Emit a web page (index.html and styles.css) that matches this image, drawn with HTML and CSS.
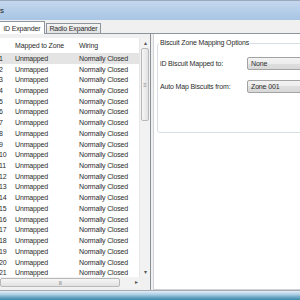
FILE: index.html
```html
<!DOCTYPE html>
<html>
<head>
<meta charset="utf-8">
<link rel="stylesheet" href="styles.css">
</head>
<body>
<div class="titlebar"><span class="title">s</span></div>
<div class="tabs">
  <div class="tab active">iD Expander</div>
  <div class="tab">Radio Expander</div>
</div>
<div class="main">
  <div class="list">
    <div class="listmain">
      <div class="grid">
        <div class="row header"><span class="c1"></span><span class="c2">Mapped to Zone</span><span class="c3">Wiring</span></div>
        <div class="row sel"><span class="c1">1</span><span class="c2">Unmapped</span><span class="c3">Normally Closed</span></div>
        <div class="row"><span class="c1">2</span><span class="c2">Unmapped</span><span class="c3">Normally Closed</span></div>
        <div class="row"><span class="c1">3</span><span class="c2">Unmapped</span><span class="c3">Normally Closed</span></div>
        <div class="row"><span class="c1">4</span><span class="c2">Unmapped</span><span class="c3">Normally Closed</span></div>
        <div class="row"><span class="c1">5</span><span class="c2">Unmapped</span><span class="c3">Normally Closed</span></div>
        <div class="row"><span class="c1">6</span><span class="c2">Unmapped</span><span class="c3">Normally Closed</span></div>
        <div class="row"><span class="c1">7</span><span class="c2">Unmapped</span><span class="c3">Normally Closed</span></div>
        <div class="row"><span class="c1">8</span><span class="c2">Unmapped</span><span class="c3">Normally Closed</span></div>
        <div class="row"><span class="c1">9</span><span class="c2">Unmapped</span><span class="c3">Normally Closed</span></div>
        <div class="row"><span class="c1">10</span><span class="c2">Unmapped</span><span class="c3">Normally Closed</span></div>
        <div class="row"><span class="c1">11</span><span class="c2">Unmapped</span><span class="c3">Normally Closed</span></div>
        <div class="row"><span class="c1">12</span><span class="c2">Unmapped</span><span class="c3">Normally Closed</span></div>
        <div class="row"><span class="c1">13</span><span class="c2">Unmapped</span><span class="c3">Normally Closed</span></div>
        <div class="row"><span class="c1">14</span><span class="c2">Unmapped</span><span class="c3">Normally Closed</span></div>
        <div class="row"><span class="c1">15</span><span class="c2">Unmapped</span><span class="c3">Normally Closed</span></div>
        <div class="row"><span class="c1">16</span><span class="c2">Unmapped</span><span class="c3">Normally Closed</span></div>
        <div class="row"><span class="c1">17</span><span class="c2">Unmapped</span><span class="c3">Normally Closed</span></div>
        <div class="row"><span class="c1">18</span><span class="c2">Unmapped</span><span class="c3">Normally Closed</span></div>
        <div class="row"><span class="c1">19</span><span class="c2">Unmapped</span><span class="c3">Normally Closed</span></div>
        <div class="row"><span class="c1">20</span><span class="c2">Unmapped</span><span class="c3">Normally Closed</span></div>
        <div class="row"><span class="c1">21</span><span class="c2">Unmapped</span><span class="c3">Normally Closed</span></div>
      </div>
      <div class="vscroll">
        <div class="arrow">&#9652;</div>
        <div class="vthumb"><span class="grip">&#8801;</span></div>
        <div class="vtrack"></div>
        <div class="arrow">&#9662;</div>
      </div>
    </div>
    <div class="hscroll">
      <div class="hthumb"><span class="hgrip">III</span></div>
      <div class="htrack"></div>
      <div class="arrow">&#9656;</div>
      <div class="corner"></div>
    </div>
  </div>
  <div class="splitter"></div>
  <div class="right">
    <fieldset class="group">
      <legend>Biscuit Zone Mapping Options</legend>
      <div class="field"><span class="label">iD Biscuit Mapped to:</span><span class="combo">None</span></div>
      <div class="field"><span class="label">Auto Map Biscuits from:</span><span class="combo">Zone 001</span></div>
    </fieldset>
  </div>
</div>
<div class="frame"></div>
</body>
</html>
```
FILE: styles.css
```css
html, body {
  margin: 0;
  padding: 0;
}
body {
  width: 300px;
  height: 300px;
  overflow: hidden;
  font-family: "Liberation Sans", Arial, sans-serif;
  font-size: 7px;
  letter-spacing: -0.15px;
  color: #2b2b2b;
  background: #f0f0f0;
}
.titlebar {
  height: 20px;
  box-sizing: border-box;
  border-top: 1px solid #9aa9bb;
  background: linear-gradient(#c3d7ed, #a8c5e4);
  display: flex;
  align-items: center;
}
.title {
  font-size: 8px;
  color: #1a1a1a;
}
.tabs {
  height: 14px;
  box-sizing: border-box;
  display: flex;
  align-items: flex-end;
  border-bottom: 1px solid #8e949c;
  background: #f0f0f0;
}
.tab {
  display: flex;
  align-items: center;
  justify-content: center;
  box-sizing: border-box;
  white-space: nowrap;
}
.tab.active {
  width: 45px;
  height: 13px;
  margin-bottom: -1px;
  background: #ffffff;
  border: 1px solid #8e949c;
  border-left: none;
  border-bottom: none;
}
.tab:not(.active) {
  width: 55px;
  height: 10px;
  margin-left: 1px;
  background: linear-gradient(#f4f4f4, #e2e2e2);
  border: 1px solid #8e949c;
  border-bottom: none;
}
.main {
  height: 256px;
  display: flex;
  background: #ffffff;
}
.list {
  width: 151px;
  box-sizing: border-box;
  border-right: 1px solid #8a8f96;
  padding-top: 4px;
  padding-bottom: 2px;
  display: flex;
  flex-direction: column;
  background: #f0f0f0;
}
.listmain {
  flex: 1;
  display: flex;
  overflow: hidden;
  min-height: 0;
  background: #ffffff;
}
.grid {
  flex: 1;
  overflow: hidden;
}
.row {
  height: 10.72px;
  display: flex;
  align-items: center;
  white-space: nowrap;
}
.row.header {
  height: 15px;
}
.row.sel {
  background: #e4e4e4;
}
.c1 {
  width: 16px;
  margin-left: -1px;
}
.c2 {
  width: 64px;
}
.vscroll {
  width: 10px;
  display: flex;
  flex-direction: column;
  background: #f2f2f2;
  border-left: 1px solid #e6e6e6;
}
.arrow {
  height: 10px;
  font-size: 6px;
  line-height: 10px;
  text-align: center;
  color: #555;
  flex: none;
}
.vthumb {
  height: 73px;
  margin: 0 1px;
  box-sizing: border-box;
  border: 1px solid #b9b9b9;
  border-radius: 2px;
  background: linear-gradient(90deg, #f6f6f6, #e2e2e2);
  display: flex;
  align-items: center;
  justify-content: center;
}
.grip {
  font-size: 6px;
  color: #888;
}
.vtrack {
  flex: 1;
}
.hscroll {
  height: 11px;
  display: flex;
  background: #f2f2f2;
}
.hthumb {
  width: 120px;
  box-sizing: border-box;
  border: 1px solid #b9b9b9;
  border-radius: 2px;
  margin: 1px 0;
  background: linear-gradient(#f6f6f6, #e2e2e2);
  display: flex;
  align-items: center;
  justify-content: center;
}
.hgrip {
  font-size: 5px;
  color: #888;
  letter-spacing: -0.5px;
}
.htrack {
  flex: 1;
}
.hscroll .arrow {
  width: 8px;
  height: 11px;
  line-height: 11px;
}
.corner {
  width: 10px;
  background: #f0f0f0;
}
.splitter {
  width: 2px;
  background: #f0f0f0;
}
.right {
  flex: 1;
  min-width: 0;
  border-left: 1px solid #cfd3d7;
  border-bottom: 1px solid #cfd3d7;
  overflow: hidden;
}
.group {
  margin: 4px -20px 0 3px;
  padding: 9px 2px 39px 2px;
  border: 1px solid #d5dfe5;
  border-radius: 3px;
  display: flex;
  flex-direction: column;
  gap: 10px;
}
.group legend {
  padding: 0 1px;
  line-height: 10px;
  margin-left: -1px;
}
.field {
  height: 13px;
  display: flex;
  align-items: center;
  white-space: nowrap;
}
.label {
  width: 87px;
}
.combo {
  width: 90px;
  height: 13px;
  box-sizing: border-box;
  border: 1px solid #a3a3a3;
  border-radius: 2px;
  background: linear-gradient(#f3f3f3, #ececec 50%, #dfdfdf 50%, #d8d8d8);
  padding-left: 3px;
  display: flex;
  align-items: center;
}
.frame {
  height: 10px;
  box-sizing: border-box;
  border-top: 1px solid #a3aab2;
  background: linear-gradient(#e4eef6, #a9cde4 40%, #6aa6c6 70%, #3f8aaa);
}
```
